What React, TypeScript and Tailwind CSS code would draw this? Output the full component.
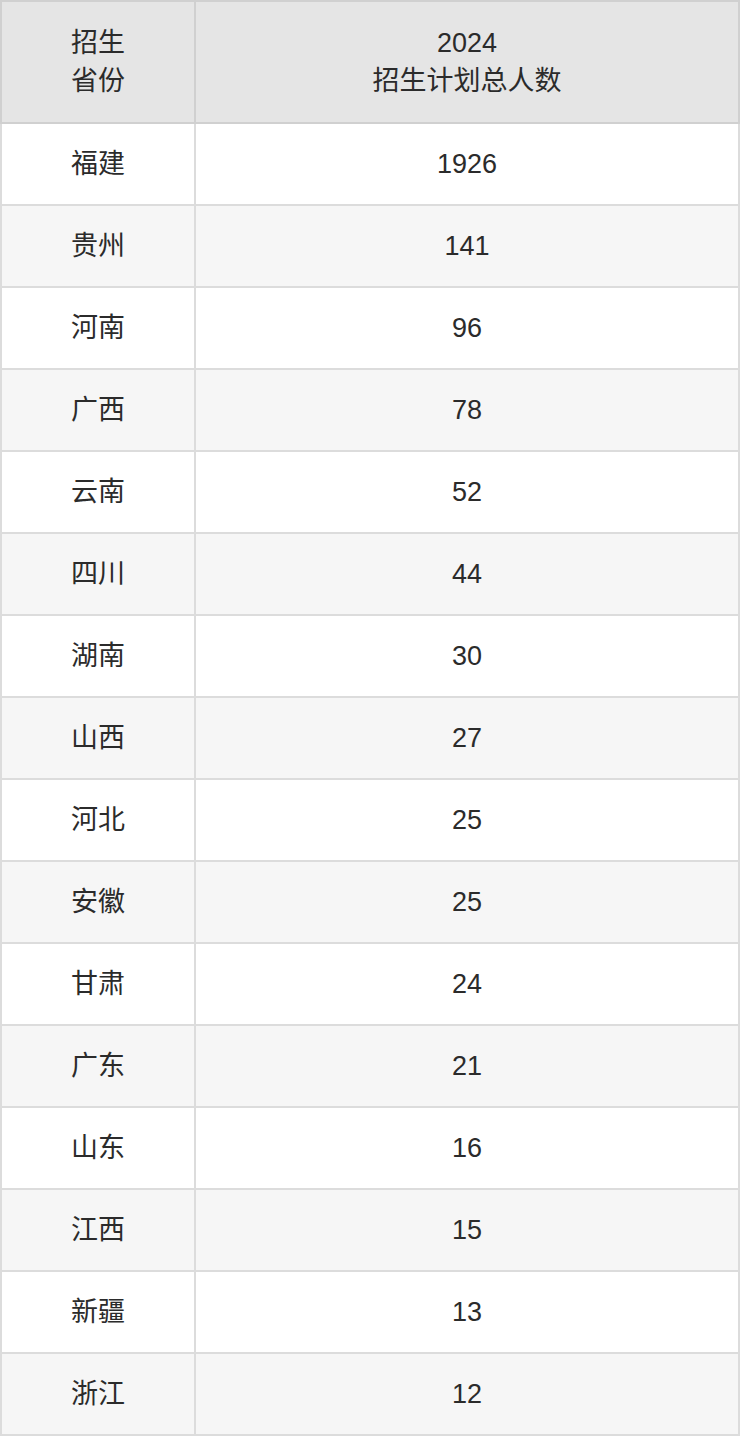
const ROWS: [string, number][] = [
  ['福建', 1926],
  ['贵州', 141],
  ['河南', 96],
  ['广西', 78],
  ['云南', 52],
  ['四川', 44],
  ['湖南', 30],
  ['山西', 27],
  ['河北', 25],
  ['安徽', 25],
  ['甘肃', 24],
  ['广东', 21],
  ['山东', 16],
  ['江西', 15],
  ['新疆', 13],
  ['浙江', 12],
]

export default function App() {
  return (
    <div className="w-[740px] bg-white text-[#2b2b2b] font-['Liberation_Sans','Noto_Sans_CJK_SC',sans-serif]">
      <table className="w-full border-collapse border-2 border-[#dcdcdc] text-[27px] leading-[38px] text-center">
        <thead>
          <tr className="bg-[#e5e5e5] h-[122px]">
            <th className="w-[194px] border-2 border-[#d0d0d0] font-normal">招生<br />省份</th>
            <th className="border-2 border-[#d0d0d0] font-normal">2024<br />招生计划总人数</th>
          </tr>
        </thead>
        <tbody>
          {ROWS.map(([prov, n], i) => (
            <tr key={prov} className={`h-[82px] ${i % 2 === 1 ? 'bg-[#f6f6f6]' : 'bg-white'}`}>
              <td className="border-2 border-[#dcdcdc]">{prov}</td>
              <td className="border-2 border-[#dcdcdc]">{n}</td>
            </tr>
          ))}
        </tbody>
      </table>
    </div>
  )
}
